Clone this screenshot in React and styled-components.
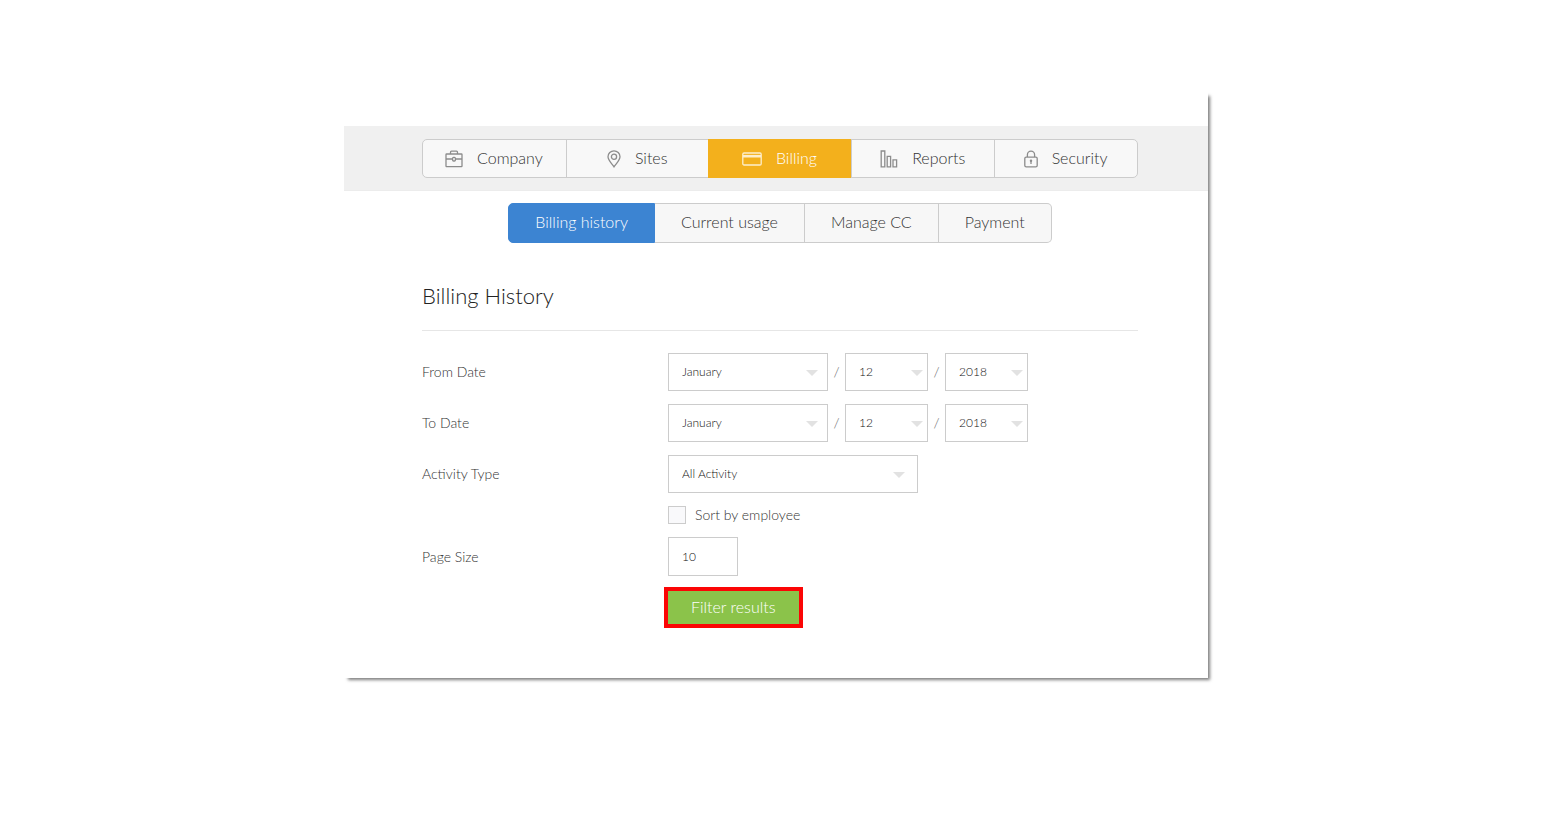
import React, { useState } from "react";
import styled, { createGlobalStyle } from "styled-components";

const GlobalStyle = createGlobalStyle`
  * {
    box-sizing: border-box;
  }
  body {
    margin: 0;
    background: #fff;
    color: #333;
    font-family: Lato, "Liberation Sans", sans-serif;
    font-weight: 300;
    font-size: 14px;
    line-height: 20px;
  }
`;

const Page = styled.div`
  padding: 92px 16px 92px 0;
`;

const Card = styled.main`
  max-width: 864px;
  margin: 0 auto;
  padding: 34px 0 50px;
  background: #fff;
  box-shadow: 3px 3px 3px -1px rgba(0, 0, 0, 0.5);
`;

const Header = styled.header`
  padding: 13px 70px 12px 78px;
  background: #f0f0f0;
  border-bottom: 1px solid #ececec;
`;

const MainNav = styled.nav`
  display: grid;
  grid-template-columns: repeat(5, 1fr);
  border: 1px solid #ccc;
  border-radius: 5px;
  background: #f8f8f8;
`;

const MainLink = styled.a`
  display: flex;
  align-items: center;
  justify-content: center;
  gap: 14px;
  height: 37px;
  padding: 0 1px 1px 0;
  border-left: 1px solid #ccc;
  color: #333;
  font-size: 16px;
  text-decoration: none;
  &:first-child {
    border-left: none;
  }
  svg {
    flex: none;
    color: #8c8c8c;
    margin-top: 2px;
  }
  &[aria-current] {
    margin: -1px 0 -1px -1px;
    height: 39px;
    border-color: #f3b01c;
    background: #f3b01c;
    color: #fff;
  }
  &[aria-current] svg {
    color: #fdeecb;
  }
`;

const Content = styled.div`
  padding: 12px 70px 0 78px;
`;

const SubNav = styled.nav`
  display: flex;
  justify-content: center;
`;

const SubLink = styled.a`
  height: 40px;
  padding: 0 26px;
  border: 1px solid #ccc;
  border-left-width: 0;
  background: #f7f7f7;
  color: #333;
  font-size: 16px;
  line-height: 36px;
  text-decoration: none;
  &:first-child {
    border-left-width: 1px;
    border-radius: 5px 0 0 5px;
  }
  &:last-child {
    border-radius: 0 5px 5px 0;
  }
  &[aria-current] {
    border-color: #3c84d2;
    background: #3c84d2;
    color: #fff;
  }
`;

const Title = styled.h1`
  margin: 37px 0 22px;
  padding-bottom: 18px;
  border-bottom: 1px solid #e6e6e6;
  font-size: 22px;
  font-weight: 300;
  line-height: 32px;
  color: #222;
`;

const Form = styled.form`
  display: grid;
  gap: 13px;
`;

const Row = styled.div`
  display: grid;
  grid-template-columns: 246px 1fr;
  align-items: center;
`;

const RowLabel = styled.label`
  grid-column: 1;
`;

const Fields = styled.div`
  grid-column: 2;
  display: flex;
  align-items: center;
`;

const Slash = styled.span`
  width: 17px;
  text-align: center;
  color: #666;
`;

const SelectWrap = styled.span`
  position: relative;
  width: ${(props) => props.$width}px;
  &::after {
    content: "";
    position: absolute;
    top: 17px;
    right: ${(props) => props.$arrow}px;
    border: 6px solid transparent;
    border-top-color: #e2e2e2;
    border-bottom: none;
    pointer-events: none;
  }
`;

const SelectBox = styled.select`
  display: block;
  appearance: none;
  width: 100%;
  height: 38px;
  padding: 0 12px 0 13px;
  border: 1px solid #ccc;
  border-radius: 0;
  background: #fff;
  color: #111;
  font: inherit;
  font-size: 12px;
`;

const CheckLabel = styled.label`
  display: flex;
  gap: 9px;
  height: 18px;
  line-height: 18px;
`;

const Checkbox = styled.input`
  appearance: none;
  width: 18px;
  height: 18px;
  margin: 0;
  border: 1px solid #ccc;
  background: #f9f9fb;
  &:checked {
    background: #3c84d2;
  }
`;

const SizeInput = styled.input`
  width: 70px;
  height: 39px;
  padding: 0 13px;
  border: 1px solid #ccc;
  background: #fff;
  color: #111;
  font: inherit;
  font-size: 12px;
`;

const SubmitButton = styled.button`
  height: 41px;
  margin: -2px 0 0 -4px;
  padding: 0 23px 1px;
  border: 4px solid #fb0505;
  background: #8bc34a;
  color: #fff;
  font: inherit;
  font-size: 16px;
  cursor: pointer;
`;

const Icon = ({ width, children }) => (
  <svg
    width={width}
    height="18"
    viewBox={`0 0 ${width} 18`}
    fill="none"
    stroke="currentColor"
    strokeWidth="1.3"
    aria-hidden="true"
  >
    {children}
  </svg>
);

const CompanyIcon = () => (
  <Icon width={18}>
    <rect x="1" y="4" width="16" height="12.6" rx="0.6" />
    <path d="M5.5 4V2.2q0-1 1-1h5q1 0 1 1V4M1 9h6.5M10.5 9H17" />
    <rect x="7.6" y="7.4" width="2.8" height="3.6" rx="1" />
  </Icon>
);

const SitesIcon = () => (
  <Icon width={14}>
    <path d="M7 16.8C4.5 13.3 1 10.2 1 6.8a6 6 0 0 1 12 0c0 3.4-3.5 6.5-6 10z" />
    <circle cx="7" cy="6.8" r="2.6" />
  </Icon>
);

const BillingIcon = () => (
  <Icon width={20}>
    <rect x="0.8" y="3" width="18.4" height="12" rx="1.2" />
    <path d="M1 6.2h18" strokeWidth="2.6" />
  </Icon>
);

const ReportsIcon = () => (
  <Icon width={18}>
    <path d="M1.2 1h3.6v15.8H1.2zM7.2 6.4h3.4v10.4H7.2zM13 9.8h3.6v7H13z" />
  </Icon>
);

const SecurityIcon = () => (
  <Icon width={14}>
    <rect x="0.8" y="7.2" width="12.4" height="9.6" rx="1.4" />
    <path d="M3.4 7V4.8a3.6 3.6 0 0 1 7.2 0V7" />
    <path d="M7 10.4v3.6" />
    <circle cx="7" cy="10.8" r="0.6" />
  </Icon>
);

const sections = [
  { text: "Company", icon: <CompanyIcon /> },
  { text: "Sites", icon: <SitesIcon /> },
  { text: "Billing", icon: <BillingIcon />, current: true },
  { text: "Reports", icon: <ReportsIcon /> },
  { text: "Security", icon: <SecurityIcon /> },
];

const tabs = ["Billing history", "Current usage", "Manage CC", "Payment"];

const months = [
  "January",
  "February",
  "March",
  "April",
  "May",
  "June",
  "July",
  "August",
  "September",
  "October",
  "November",
  "December",
];
const days = Array.from({ length: 31 }, (_, i) => String(i + 1));
const years = ["2016", "2017", "2018"];

const Select = ({ options, width, arrow, ...rest }) => (
  <SelectWrap $width={width} $arrow={arrow}>
    <SelectBox {...rest}>
      {options.map((option) => (
        <option key={option}>{option}</option>
      ))}
    </SelectBox>
  </SelectWrap>
);

const DateRow = ({ id, label }) => (
  <Row>
    <RowLabel htmlFor={id}>{label}</RowLabel>
    <Fields>
      <Select
        id={id}
        options={months}
        width={160}
        arrow={10}
        defaultValue="January"
      />
      <Slash>/</Slash>
      <Select
        aria-label={`${label} day`}
        options={days}
        width={83}
        arrow={5}
        defaultValue="12"
      />
      <Slash>/</Slash>
      <Select
        aria-label={`${label} year`}
        options={years}
        width={83}
        arrow={5}
        defaultValue="2018"
      />
    </Fields>
  </Row>
);

const App = () => {
  const [pageSize, setPageSize] = useState("10");
  const [byEmployee, setByEmployee] = useState(false);

  return (
    <Page>
      <GlobalStyle />
      <Card>
        <Header>
          <MainNav>
            {sections.map(({ text, icon, current }) => (
              <MainLink
                key={text}
                href="#"
                aria-current={current ? "page" : undefined}
              >
                {icon}
                {text}
              </MainLink>
            ))}
          </MainNav>
        </Header>
        <Content>
          <SubNav>
            {tabs.map((text, index) => (
              <SubLink
                key={text}
                href="#"
                aria-current={index === 0 ? "page" : undefined}
              >
                {text}
              </SubLink>
            ))}
          </SubNav>
          <Title>Billing History</Title>
          <Form onSubmit={(e) => e.preventDefault()}>
            <DateRow id="from" label="From Date" />
            <DateRow id="to" label="To Date" />
            <Row>
              <RowLabel htmlFor="activity">Activity Type</RowLabel>
              <Fields>
                <Select
                  id="activity"
                  options={["All Activity", "Payments", "Charges"]}
                  width={250}
                  arrow={13}
                />
              </Fields>
            </Row>
            <Row>
              <Fields>
                <CheckLabel>
                  <Checkbox
                    type="checkbox"
                    checked={byEmployee}
                    onChange={(e) => setByEmployee(e.target.checked)}
                  />
                  Sort by employee
                </CheckLabel>
              </Fields>
            </Row>
            <Row>
              <RowLabel htmlFor="size">Page Size</RowLabel>
              <Fields>
                <SizeInput
                  id="size"
                  type="text"
                  value={pageSize}
                  onChange={(e) => setPageSize(e.target.value)}
                />
              </Fields>
            </Row>
            <Row>
              <Fields>
                <SubmitButton type="submit">Filter results</SubmitButton>
              </Fields>
            </Row>
          </Form>
        </Content>
      </Card>
    </Page>
  );
};

export default App;
